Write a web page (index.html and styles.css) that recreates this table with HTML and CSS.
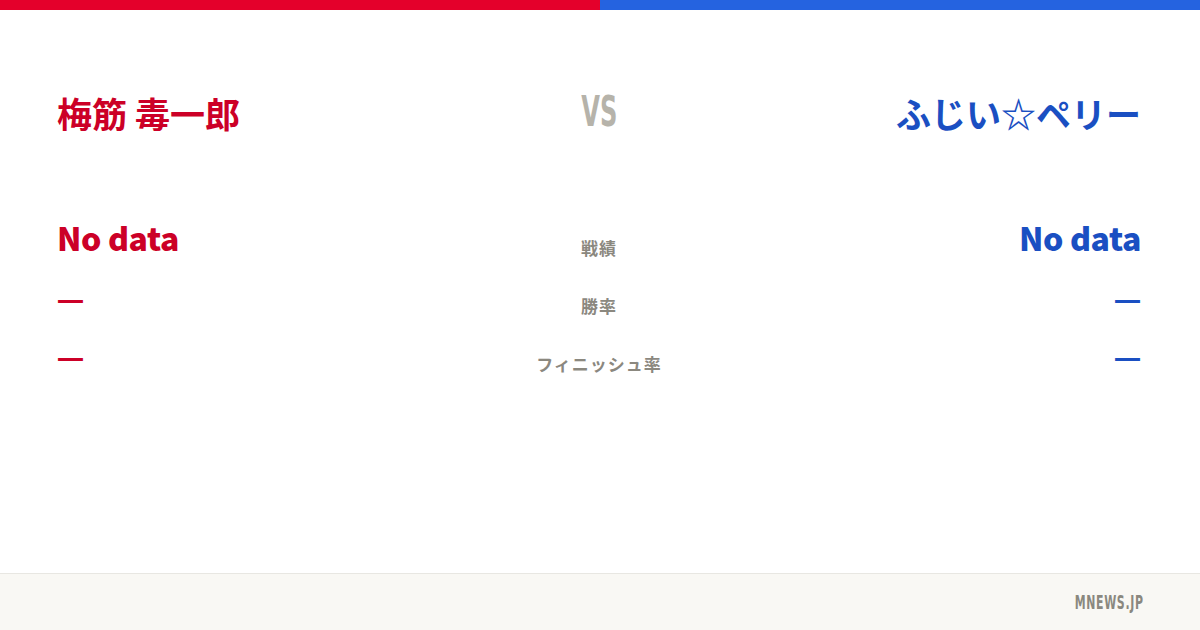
FILE: index.html
```html
<!DOCTYPE html>
<html lang="ja">
<head>
  <meta charset="UTF-8" />
  <title>梅筋 毒一郎 vs ふじい☆ペリー</title>
  <link rel="stylesheet" href="styles.css">
</head>
<body>

  <div class="topbar">
    <div class="bar-red"></div>
    <div class="bar-blue"></div>
  </div>

  <main class="card">
    <div class="names">
      <div class="name red">梅筋 毒一郎</div>
      <div class="vs">VS</div>
      <div class="name blue right">ふじい☆ペリー</div>
    </div>

    <div class="stats">
      <div class="val red">No data</div>
      <div class="label">戦績</div>
      <div class="val blue right">No data</div>

      <div class="dash red">—</div>
      <div class="label">勝率</div>
      <div class="dash blue right">—</div>

      <div class="dash red">—</div>
      <div class="label">フィニッシュ率</div>
      <div class="dash blue right">—</div>
    </div>
  </main>

  <footer class="footer">
    <span class="site">MNEWS.JP</span>
  </footer>

</body>
</html>
```

FILE: styles.css
```css
html, body {
  margin: 0;
  height: 100%;
}
body {
  display: flex;
  flex-direction: column;
  width: 1200px;
  height: 630px;
  background-color: white;
  font-family: "Noto Sans CJK JP", "Noto Sans", sans-serif;
  overflow: hidden;
}
.topbar {
  display: flex;
  height: 10px;
}
.bar-red {
  flex: 1;
  background-color: #e4002b;
}
.bar-blue {
  flex: 1;
  background-color: #2563e0;
}
.card {
  flex: 1;
  padding: 82px 59px 0 57px;
}
.red {
  color: #cc0027;
}
.blue {
  color: #1a4fc2;
}
.right {
  text-align: right;
}
.names {
  display: grid;
  grid-template-columns: 1fr auto 1fr;
  align-items: center;
}
.name {
  font-size: 35px;
  font-weight: 700;
  line-height: 42px;
}
.vs {
  font-family: "DejaVu Sans", sans-serif;
  font-stretch: condensed;
  font-weight: 700;
  font-size: 42px;
  line-height: 42px;
  color: #b6b3aa;
  transform: scaleX(0.64);
  margin-top: -2px;
}
.stats {
  display: grid;
  grid-template-columns: 1fr auto 1fr;
  grid-auto-rows: 58px;
  align-items: center;
  margin-top: 76px;
}
.val {
  font-size: 32px;
  font-weight: 900;
  letter-spacing: -0.4px;
  line-height: 40px;
  margin-top: -4px;
}
.dash {
  font-family: "Noto Sans", sans-serif;
  font-size: 27px;
  font-weight: 700;
  line-height: 30px;
  padding-top: 4px;
}
.label {
  font-size: 17px;
  font-weight: 700;
  letter-spacing: 1px;
  color: #8b887f;
  text-align: center;
  padding-top: 16px;
}
.footer {
  height: 56px;
  border-top: 1px solid #e8e7e2;
  background-color: #f9f8f4;
  display: flex;
  align-items: center;
  justify-content: flex-end;
  padding-right: 56px;
}
.site {
  font-family: "DejaVu Sans", sans-serif;
  font-stretch: condensed;
  font-weight: 700;
  font-size: 19px;
  letter-spacing: 1px;
  color: #8a887f;
  display: inline-block;
  transform: scaleX(0.64);
  transform-origin: right center;
}
```
